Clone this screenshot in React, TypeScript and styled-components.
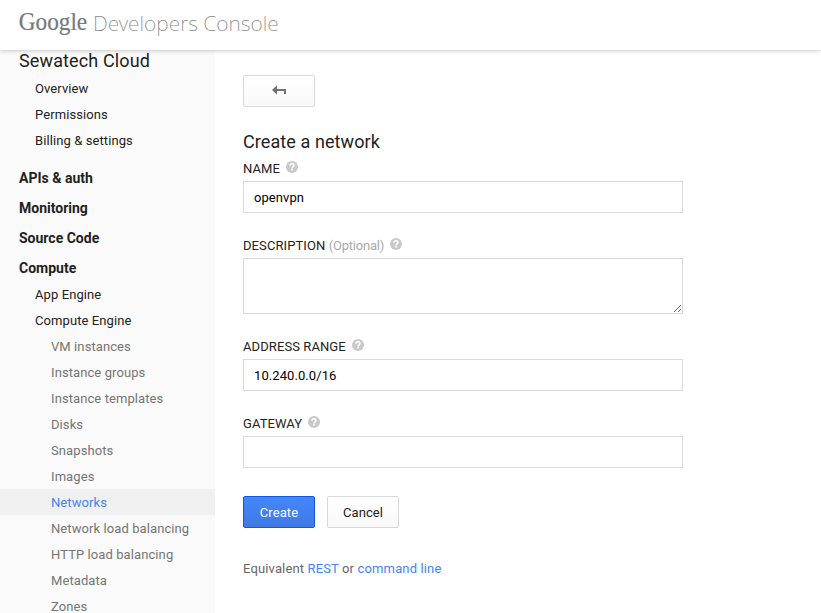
import React from 'react';
import styled, { createGlobalStyle, css } from 'styled-components';

const GlobalStyle = createGlobalStyle`
  * { box-sizing: border-box; }
  body {
    margin: 0;
    background: #fff;
    color: #222;
    font: 13px/26px Roboto, sans-serif;
    letter-spacing: 0.09px;
    overflow: hidden;
  }
`;

const Page = styled.div`
  display: flex;
  flex-direction: column;
  height: 100vh;
  overflow: hidden;
`;

const Header = styled.header`
  display: flex;
  flex: none;
  height: 50px;
  padding-left: 18px;
  background: #fff;
  box-shadow: 0 1px 4px rgba(0, 0, 0, 0.2);
  z-index: 1;
`;

const Logo = styled.svg`
  display: block;
  width: 72px;
  height: 50px;
  overflow: visible;
  letter-spacing: 0;
`;

const ProductName = styled.span`
  margin-left: 3px;
  color: #888;
  font: 200 21px/46px 'Noto Sans', sans-serif;
  letter-spacing: 0;
  white-space: nowrap;
`;

const Body = styled.div`
  display: flex;
  flex: 1;
  min-height: 0;
`;

const Sidebar = styled.nav`
  flex: none;
  width: 215px;
  overflow: hidden;
  background: #fafafa;
`;

const Project = styled.div`
  height: 25px;
  padding-left: 19px;
  font-size: 18px;
  line-height: 21px;
  letter-spacing: 0.13px;
`;

const Section = styled.div<{ $first?: boolean }>`
  height: 26px;
  margin-top: ${(p) => (p.$first ? 12 : 4)}px;
  padding-left: 19px;
  font-size: 14px;
  font-weight: 700;
  letter-spacing: 0;
`;

const NavItem = styled.div<{ $deep?: boolean; $active?: boolean }>`
  height: 26px;
  padding-left: ${(p) => (p.$deep ? 51 : 35)}px;
  line-height: 28px;
  white-space: nowrap;
  ${(p) => p.$deep && css`color: #757575;`}
  ${(p) => p.$active && css`
    color: #4285f4;
    background: #f0f0f0;
  `}
`;

const Content = styled.main`
  display: flex;
  flex-direction: column;
  align-items: flex-start;
  padding: 25px 0 0 28px;
`;

const Button = styled.button<{ $primary?: boolean }>`
  display: flex;
  align-items: center;
  justify-content: center;
  width: 72px;
  height: 32px;
  padding: 2px 0 0;
  border: 1px solid #d9d9d9;
  border-radius: 2px;
  background: linear-gradient(#fff, #f9f9f9);
  color: #222;
  font: inherit;
  letter-spacing: inherit;
  ${(p) => p.$primary && css`
    border-color: #1155e0;
    background: linear-gradient(#4387fd, #4079e4);
    color: #fff;
  `}
`;

const BackArrow = styled.svg`
  display: block;
  width: 14px;
  height: 10px;
  margin-bottom: 4px;
`;

const Title = styled.h1`
  margin: 22px 0 0;
  font-size: 18px;
  font-weight: 400;
  line-height: 26px;
`;

const Field = styled.div`
  display: flex;
  flex-direction: column;
  margin-bottom: 19px;
`;

const Label = styled.label`
  display: flex;
  height: 26px;
  line-height: 28px;
  white-space: pre;
`;

const Optional = styled.span`
  color: #aaa;
  letter-spacing: -0.21px;
`;

const HelpIcon = styled.svg`
  width: 12px;
  height: 12px;
  margin: 6px 0 0 6px;
`;

const inputStyle = css`
  display: block;
  width: 440px;
  margin: 0;
  border: 1px solid #d9d9d9;
  border-radius: 0;
  background: #fff;
  color: #000;
  font: 13px Roboto, sans-serif;
  letter-spacing: 0.08px;
  outline: none;
`;

const Input = styled.input`
  ${inputStyle}
  height: 32px;
  padding: 1px 10px 0;
`;

const TextArea = styled.textarea`
  ${inputStyle}
  height: 56px;
  padding: 8px 10px;
  resize: both;
`;

const Actions = styled.div`
  display: flex;
  gap: 12px;
  margin-top: 9px;
`;

const Equivalent = styled.p`
  margin: 28px 0 0;
  color: #666;
  letter-spacing: 0.14px;
`;

const Link = styled.a`
  color: #4285f4;
  text-decoration: none;
`;

const Help = () => (
  <HelpIcon viewBox="0 0 12 12">
    <circle cx="6" cy="6" r="6" fill="#c9c9c9" />
    <path d="M4 4.7C4 3.3 4.9 2.7 6 2.7s2 .7 2 1.8C8 5.9 6.1 5.8 6.1 7.4" fill="none" stroke="#fff" strokeWidth="1.5" />
    <path d="M5.3 8.1h1.6v1.5H5.3z" fill="#fff" />
  </HelpIcon>
);

const engineItems = [
  'VM instances', 'Instance groups', 'Instance templates', 'Disks', 'Snapshots', 'Images',
  'Networks', 'Network load balancing', 'HTTP load balancing', 'Metadata', 'Zones',
];

export default function App() {
  return (
    <Page>
      <GlobalStyle />
      <Header>
        <Logo viewBox="0 0 72 50">
          <text x="0.7" y="30.4" textLength="68.5" lengthAdjust="spacingAndGlyphs" fontFamily="'Liberation Serif', serif" fontSize="24.5" fill="#737b80" stroke="#737b80" strokeWidth="0.2">Google</text>
        </Logo>
        <ProductName>Developers Console</ProductName>
      </Header>
      <Body>
        <Sidebar>
          <Project>Sewatech Cloud</Project>
          <NavItem>Overview</NavItem>
          <NavItem>Permissions</NavItem>
          <NavItem>Billing &amp; settings</NavItem>
          <Section $first>APIs &amp; auth</Section>
          <Section>Monitoring</Section>
          <Section>Source Code</Section>
          <Section>Compute</Section>
          <NavItem>App Engine</NavItem>
          <NavItem>Compute Engine</NavItem>
          {engineItems.map((name) => (
            <NavItem key={name} $deep $active={name === 'Networks'}>{name}</NavItem>
          ))}
        </Sidebar>
        <Content>
          <Button aria-label="Back">
            <BackArrow viewBox="0 0 14 10">
              <path d="M0 5l5-4.7V4h9v5h-2V6H5v3.7z" fill="#737373" />
            </BackArrow>
          </Button>
          <Title>Create a network</Title>
          <Field>
            <Label>NAME<Help /></Label>
            <Input defaultValue="openvpn" />
          </Field>
          <Field>
            <Label>DESCRIPTION <Optional>(Optional)</Optional><Help /></Label>
            <TextArea />
          </Field>
          <Field>
            <Label>ADDRESS RANGE<Help /></Label>
            <Input defaultValue="10.240.0.0/16" />
          </Field>
          <Field>
            <Label>GATEWAY<Help /></Label>
            <Input />
          </Field>
          <Actions>
            <Button $primary>Create</Button>
            <Button>Cancel</Button>
          </Actions>
          <Equivalent>Equivalent <Link>REST</Link> or <Link>command line</Link></Equivalent>
        </Content>
      </Body>
    </Page>
  );
}
